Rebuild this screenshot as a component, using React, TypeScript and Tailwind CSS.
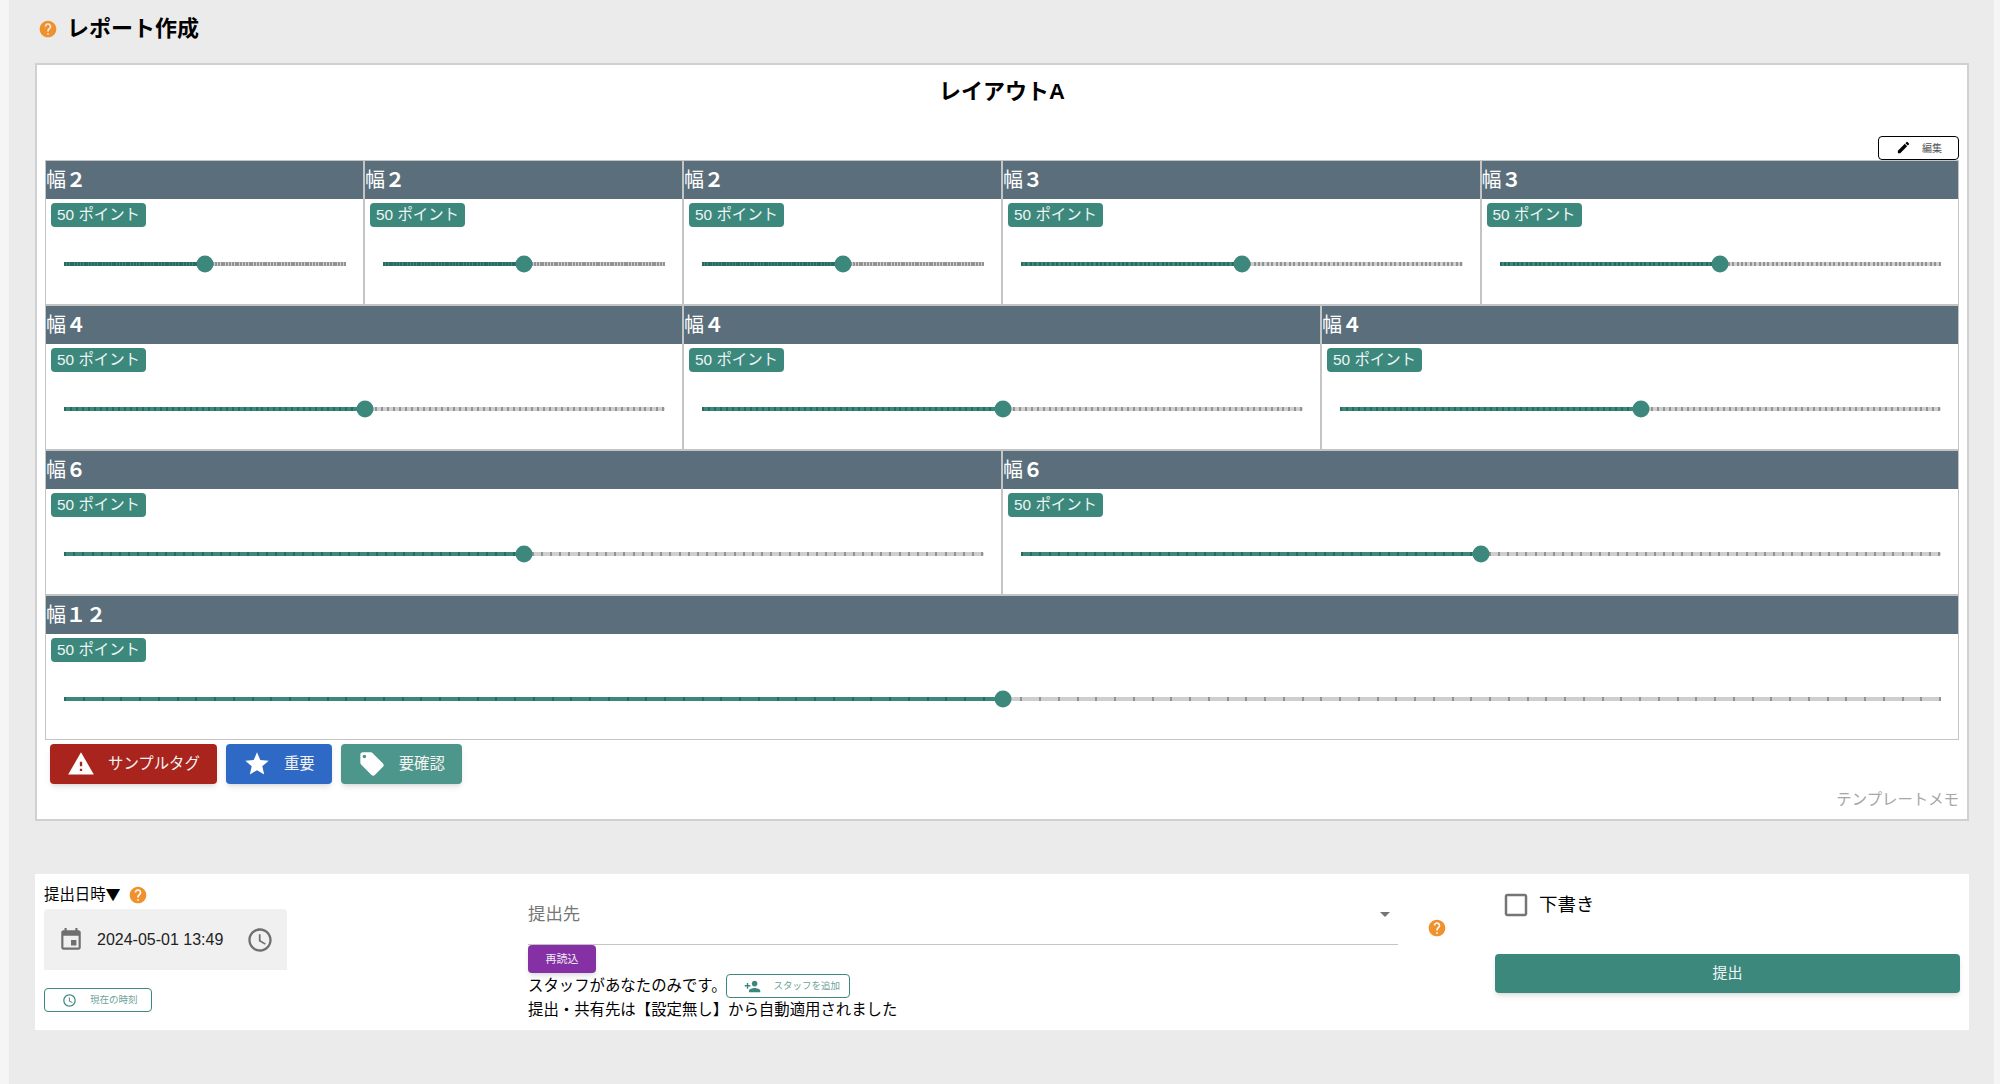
const FONT = "font-['Liberation_Sans','Noto_Sans_CJK_JP',sans-serif]";

const paths = {
  help: "M12 2C6.48 2 2 6.48 2 12s4.48 10 10 10 10-4.48 10-10S17.52 2 12 2zm1 17h-2v-2h2v2zm2.07-7.75l-.9.92C13.45 12.9 13 13.5 13 15h-2v-.5c0-1.1.45-2.1 1.17-2.83l1.24-1.26c.37-.36.59-.86.59-1.41 0-1.1-.9-2-2-2s-2 .9-2 2H8c0-2.21 1.79-4 4-4s4 1.79 4 4c0 .88-.36 1.68-.93 2.25z",
  warning: "M1 21h22L12 2 1 21zm12-3h-2v-2h2v2zm0-4h-2v-4h2v4z",
  star: "M12 17.27L18.18 21l-1.64-7.03L22 9.24l-7.19-.61L12 2 9.19 8.63 2 9.24l5.46 4.73L5.82 21z",
  tag: "M21.41 11.58l-9-9C12.05 2.22 11.55 2 11 2H4c-1.1 0-2 .9-2 2v7c0 .55.22 1.05.59 1.42l9 9c.36.36.86.58 1.41.58.55 0 1.05-.22 1.41-.59l7-7c.37-.36.59-.86.59-1.41 0-.55-.23-1.06-.59-1.42zM5.5 7C4.67 7 4 6.33 4 5.5S4.67 4 5.5 4 7 4.67 7 5.5 6.33 7 5.5 7z",
  edit: "M3 17.25V21h3.75L17.81 9.94l-3.75-3.75L3 17.25zM20.71 7.04c.39-.39.39-1.02 0-1.41l-2.34-2.34c-.39-.39-1.02-.39-1.41 0l-1.83 1.83 3.75 3.75 1.83-1.83z",
  event: "M17 12h-5v5h5v-5zM16 1v2H8V1H6v2H5c-1.11 0-1.99.9-1.99 2L3 19c0 1.1.89 2 2 2h14c1.1 0 2-.9 2-2V5c0-1.1-.9-2-2-2h-1V1h-2zm3 18H5V8h14v11z",
  clock: "M11.99 2C6.47 2 2 6.48 2 12s4.47 10 9.99 10C17.52 22 22 17.52 22 12S17.52 2 11.99 2zM12 20c-4.42 0-8-3.58-8-8s3.58-8 8-8 8 3.58 8 8-3.58 8-8 8zm.5-13H11v6l5.25 3.15.75-1.23-4.5-2.67z",
  personAdd: "M15 12c2.21 0 4-1.79 4-4s-1.79-4-4-4-4 1.79-4 4 1.79 4 4 4zm-9-2V7H4v3H1v2h3v3h2v-3h3v-2H6zm9 4c-2.67 0-8 1.34-8 4v2h16v-2c0-2.66-5.33-4-8-4z",
  checkbox: "M19 5v14H5V5h14m0-2H5c-1.1 0-2 .9-2 2v14c0 1.1.9 2 2 2h14c1.1 0 2-.9 2-2V5c0-1.1-.9-2-2-2z",
};

function Icon({ d, className }: { d: string; className: string }) {
  return (
    <svg viewBox="0 0 24 24" className={className} fill="currentColor">
      <path d={d} />
    </svg>
  );
}

const HelpIcon = () => <Icon d={paths.help} className="w-[20px] h-[20px] text-[#ef922d] shrink-0" />;

const ticks = Array.from({ length: 101 }, (_, i) => i);

function Slider() {
  return (
    <div className="relative h-1 ml-[18px] mr-[17px] mt-[35px] rounded-full bg-[#cfcfcf]">
      <div className="absolute left-0 top-0 h-1 w-1/2 rounded-l-full bg-[#3d887c]" />
      <div className="absolute inset-0 flex justify-between">
        {ticks.map((i) => (
          <span key={i} className={i < 50 ? "w-[2px] h-1 bg-[#2c6a60]" : "w-[2px] h-1 bg-[#939393]"} />
        ))}
      </div>
      <div className="absolute left-1/2 top-1/2 w-[17px] h-[17px] -translate-x-1/2 -translate-y-1/2 rounded-full bg-[#3d887c]" />
    </div>
  );
}

const cells = [
  { num: "２", span: "col-span-2" },
  { num: "２", span: "col-span-2" },
  { num: "２", span: "col-span-2" },
  { num: "３", span: "col-span-3" },
  { num: "３", span: "col-span-3" },
  { num: "４", span: "col-span-4" },
  { num: "４", span: "col-span-4" },
  { num: "４", span: "col-span-4" },
  { num: "６", span: "col-span-6" },
  { num: "６", span: "col-span-6" },
  { num: "１２", span: "col-span-12" },
];

function Cell({ num, span }: { num: string; span: string }) {
  return (
    <div className={`${span} h-[145px] border border-[#c4c4c4]`}>
      <div className="h-[38px] bg-[#5a6e7c] text-white text-[20px] leading-[38px] font-semibold">
        <span className="font-normal">幅</span>
        {num}
      </div>
      <div className="pt-[4px] pl-[5px]">
        <span className="block w-[95px] h-[24px] rounded-[4px] bg-[#3d887c] text-[#eef5f4] text-[15.4px] leading-[24px] text-center">
          50 ポイント
        </span>
      </div>
      <Slider />
    </div>
  );
}

const tags = [
  { label: "サンプルタグ", icon: paths.warning, bg: "bg-[#a8241c]" },
  { label: "重要", icon: paths.star, bg: "bg-[#2f69c6]" },
  { label: "要確認", icon: paths.tag, bg: "bg-[#4d968b]" },
];

export default function App() {
  return (
    <div className={`${FONT} flex min-h-screen bg-[#ebebeb] text-black`}>
      <div className="w-[9px] bg-[#f5f5f5]" />
      <main className="flex-1 pl-[26px] pr-[25px]">
        <div className="h-[63px] pb-[7px] pl-[3px] flex items-center gap-[9px]">
          <Icon d={paths.help} className="mt-[2px] w-[20px] h-[20px] text-[#ef922d] shrink-0" />
          <h1 className="text-[22px] font-bold">レポート作成</h1>
        </div>

        <section className="border-2 border-[#d0d0d0] bg-white pl-[8px] pr-[8px]">
          <h2 className="h-[50px] pt-[12px] text-center text-[22px] leading-[29px] font-bold">レイアウトA</h2>
          <div className="flex justify-end pt-[21px] h-[45px]">
            <button className="w-[81px] h-[24px] flex items-center pl-[17px] gap-[11px] rounded-[4px] border border-black text-[#555] text-[10px]">
              <Icon d={paths.edit} className="-mt-[2px] w-[15px] h-[15px] text-black" />
              編集
            </button>
          </div>

          <div className="grid grid-cols-12">
            {cells.map((c, i) => (
              <Cell key={i} num={c.num} span={c.span} />
            ))}
          </div>

          <div className="flex gap-[9px] ml-[5px] mt-[4px]">
            {tags.map((t) => (
              <button
                key={t.label}
                className={`${t.bg} h-[40px] flex items-center gap-[13px] pl-[17px] pr-[17px] rounded-[4px] text-[#f3f3f3] text-[15.4px] shadow-md`}
              >
                <Icon d={t.icon} className="w-[28px] h-[28px] text-white" />
                {t.label}
              </button>
            ))}
          </div>

          <p className="mt-[6px] h-[20px] mb-[9px] text-right text-[15.4px] leading-[20px] text-[#a6a6a6]">テンプレートメモ</p>
        </section>

        <section className="mt-[53px] h-[156px] flex bg-white px-[9px]">
          <div className="w-[484px] pt-[9px]">
            <div className="h-[24px] flex items-center text-[15.4px] gap-[7px]">
              <span>
                提出日時<span className="font-['Noto_Sans_CJK_JP'] text-[15px]">▼</span>
              </span>
              <HelpIcon />
            </div>
            <div className="mt-[2px] w-[243px] h-[61px] flex items-center pl-[14px] rounded-t-[4px] bg-[#f0f0f0]">
              <Icon d={paths.event} className="w-[26px] h-[26px] text-[#6f6f6f]" />
              <span className="ml-[13px] pt-[1px] w-[149px] text-[16px] text-[#222]">2024-05-01 13:49</span>
              <Icon d={paths.clock} className="w-[28px] h-[28px] text-[#6f6f6f]" />
            </div>
            <button className="mt-[18px] w-[108px] h-[24px] flex items-center pl-[17px] gap-[13px] rounded-[4px] border border-[#3d887c] text-[#6ea399] text-[9.5px]">
              <Icon d={paths.clock} className="w-[15px] h-[15px] text-[#3d887c]" />
              現在の時刻
            </button>
          </div>

          <div className="w-[870px]">
            <div className="h-[71px] pt-[28px] pr-[6px] flex justify-between border-b border-[#c4c4c4]">
              <span className="text-[17.4px] leading-[24px] text-[#777]">提出先</span>
              <span className="mt-[10px] mr-[2px] h-0 w-0 border-x-[5px] border-t-[5px] border-x-transparent border-t-[#757575]" />
            </div>
            <button className="block w-[68px] h-[28px] rounded-[4px] bg-[#8530a5] text-[#eee] text-[11px] shadow-md">再読込</button>
            <div className="mt-[1px] flex items-center text-[15.4px]">
              スタッフがあなたのみです。
              <button className="-ml-[1px] w-[124px] h-[24px] flex items-center pl-[17px] gap-[13px] rounded-[4px] border border-[#3d887c] text-[#6ea399] text-[9.5px]">
                <Icon d={paths.personAdd} className="w-[17px] h-[17px] text-[#3d887c]" />
                スタッフを追加
              </button>
            </div>
            <p className="text-[15.4px] leading-[24px]">提出・共有先は【設定無し】から自動適用されました</p>
          </div>

          <div className="w-[97px] pt-[44px] pl-[29px]">
            <HelpIcon />
          </div>

          <div className="w-[465px] pt-[16px]">
            <div className="h-[30px] pl-[6px] flex items-center gap-[8px] text-[18.5px]">
              <Icon d={paths.checkbox} className="w-[30px] h-[30px] text-[#757575]" />
              下書き
            </div>
            <button className="mt-[34px] w-full h-[39px] rounded-[4px] bg-[#3d887c] text-[#f0f6f5] text-[15px] shadow-md">提出</button>
          </div>
        </section>
      </main>
      <div className="w-[6px] bg-[#f5f5f5]" />
    </div>
  );
}
